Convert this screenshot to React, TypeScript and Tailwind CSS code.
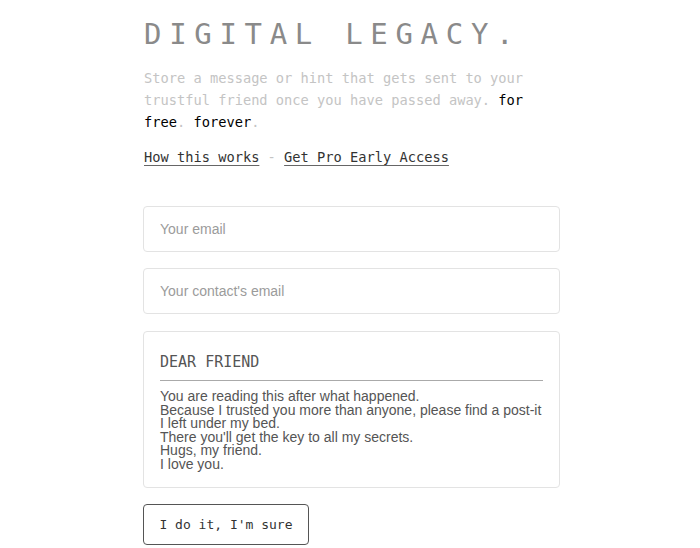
import React from 'react';

const mono = "font-['DejaVu_Sans_Mono','Liberation_Mono',monospace]";
const sans = "font-['Liberation_Sans',Arial,sans-serif]";

export default function App() {
    return (
        <div className="min-h-[548px] bg-white">
            <div className="w-[417px] ml-[143px] pt-[16px]">
                <h1 className={`${mono} text-[29px] leading-[36px] tracking-[0.265em] text-[#8a8a8a] pl-[1px]`}>
                    DIGITAL LEGACY.
                </h1>

                <p className={`${mono} mt-[15px] text-[13.7px] leading-[22px] text-[#c4c4c4] pl-[1px]`}>
                    Store a message or hint that gets sent to your trustful friend once you have passed away.{' '}
                    <span className="text-black">for</span> <span className="text-black">free</span>.{' '}
                    <span className="text-black">forever</span>.
                </p>

                <p className={`${mono} mt-[13px] text-[13.7px] leading-[22px] pl-[1px]`}>
                    <a href="#" className="text-[#333] underline underline-offset-[3px] decoration-[#666]">How this works</a>
                    <span className="text-[#c4c4c4]"> - </span>
                    <a href="#" className="text-[#333] underline underline-offset-[3px] decoration-[#666]">Get Pro Early Access</a>
                </p>

                <form className="mt-[38px] flex flex-col gap-[16px]">
                    <input
                        type="email"
                        placeholder="Your email"
                        className={`${sans} h-[46px] w-full rounded-[4px] border border-[#e3e3e3] px-[16px] text-[14px] text-[#333] placeholder:text-[#9b9b9b] outline-none`}
                    />
                    <input
                        type="email"
                        placeholder="Your contact's email"
                        className={`${sans} h-[46px] w-full rounded-[4px] border border-[#e3e3e3] px-[16px] text-[14px] text-[#333] placeholder:text-[#9b9b9b] outline-none`}
                    />
                    <div className="mt-[1px] h-[157px] w-full rounded-[4px] border border-[#e3e3e3] px-[16px] pt-[20px]">
                        <div className={`${mono} text-[15px] leading-[20px] text-[#555] pb-[8px] border-b border-[#aaa]`}>
                            DEAR FRIEND
                        </div>
                        <div className={`${sans} mt-[9px] text-[14px] leading-[13.6px] text-[#555]`}>
                            You are reading this after what happened.<br />
                            Because I trusted you more than anyone, please find a post-it<br />
                            I left under my bed.<br />
                            There you'll get the key to all my secrets.<br />
                            Hugs, my friend.<br />
                            I love you.
                        </div>
                    </div>
                    <button
                        type="button"
                        className={`${mono} h-[41px] w-[166px] rounded-[4px] border border-[#555] text-[13px] text-[#333] bg-white`}
                    >
                        I do it, I'm sure
                    </button>
                </form>
            </div>
        </div>
    );
}
